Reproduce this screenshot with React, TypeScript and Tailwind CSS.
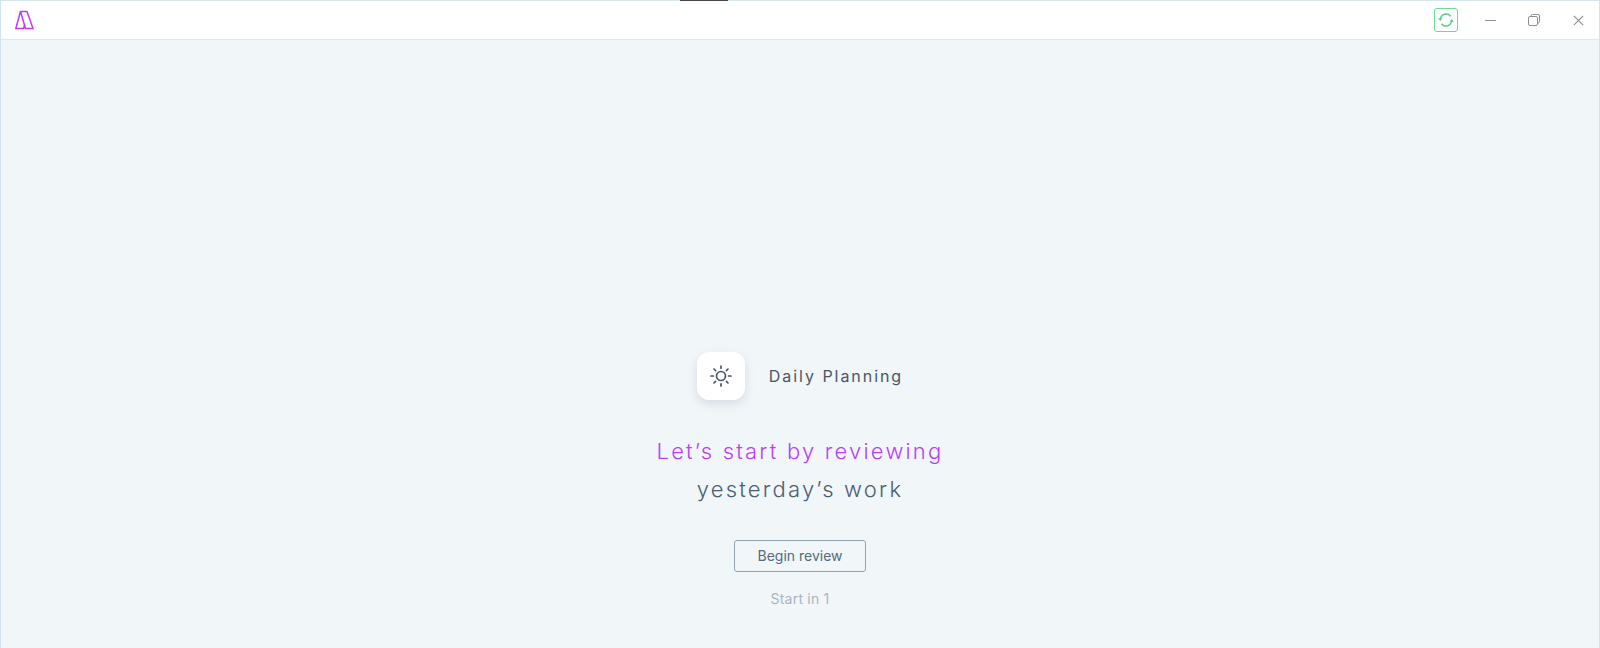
import React from "react";

const SunIcon = () => (
  <svg width="24" height="24" viewBox="0 0 24 24" fill="none" stroke="#4b5563" strokeWidth="1.7" strokeLinecap="round">
    <circle cx="12" cy="12" r="4.5" />
    <path d="M12 2v2.2M12 19.8V22M2 12h2.4M19.6 12H22M5 5l1.6 1.6M17.4 17.4 19 19M5 19l1.6-1.6M17.4 6.6 19 5" />
  </svg>
);

const App = () => {
  return (
    <div className="h-[648px] w-full flex flex-col overflow-hidden bg-[#f1f6f9] border-x border-[#cfe3f1] font-['Inter',sans-serif]">
      {/* title bar */}
      <div className="relative h-10 shrink-0 flex items-center justify-between bg-white border-b border-[#dfe8ee] border-t border-t-[#d5e6f2]">
        <div className="absolute -top-px left-[679px] w-12 h-px bg-[#444]" />
        <svg className="ml-[14px]" width="20" height="20" viewBox="0 0 20 20" fill="none" stroke="#bd3df5" strokeWidth="1.5">
          <path d="M5.5 1.5h6.5l6 17h-7.5ZM5.5 1.5 .8 18.5h7.8l1.2-5" />
        </svg>
        <div className="flex items-center">
          <div className="w-6 h-6 flex items-center justify-center rounded-[3px] border border-[#6ed79a]">
            <svg width="18" height="18" viewBox="0 0 18 18" fill="none" stroke="#5fd08e" strokeWidth="1.6">
              <path d="M3.4 8a5.7 5.7 0 0 1 10.2-2.8M14.6 10a5.7 5.7 0 0 1-10.2 2.8" />
              <path d="M1 7.2h4.6L3.3 10ZM17 10.8h-4.6L14.7 8Z" fill="#5fd08e" stroke="none" />
            </svg>
          </div>
          <div className="w-[11px] h-px bg-[#8b8f96] ml-[27px]" />
          <svg className="ml-8" width="12" height="12" viewBox="0 0 12 12" fill="none" stroke="#8b8f96">
            <rect x="0.5" y="2.5" width="9" height="9" rx="1.5" />
            <path d="M3 2.5V2A1.5 1.5 0 0 1 4.5.5H10A1.5 1.5 0 0 1 11.5 2v5.5A1.5 1.5 0 0 1 10 9h-.5" />
          </svg>
          <svg className="ml-[33px] mr-[15px]" width="11" height="11" viewBox="0 0 11 11" fill="none" stroke="#8b8f96" strokeWidth="1.1">
            <path d="m.8.8 9.4 9.4M10.2.8.8 10.2" />
          </svg>
        </div>
      </div>

      {/* planning prompt */}
      <div className="flex-1 flex flex-col items-center justify-end pb-[39px]">
        <div className="flex items-center gap-6">
          <div className="w-12 h-12 flex items-center justify-center rounded-xl bg-white shadow-[0_4px_10px_rgba(148,163,184,0.3)]">
            <SunIcon />
          </div>
          <span className="text-base font-normal tracking-[1.95px] text-[#4b5563]">Daily Planning</span>
        </div>
        <h1 className="mt-8 text-[22px] leading-[38px] tracking-[2.2px] text-center font-[350] text-[#b93ff7]">
          Let’s start by reviewing
          <br />
          <span className="text-[#4a6072]">yesterday’s work</span>
        </h1>
        <button className="mt-8 w-[132px] h-8 rounded-[3px] border border-[#94a3b3] text-sm text-[#566b7c]">
          Begin review
        </button>
        <div className="mt-[17px] text-sm tracking-[0.2px] text-[#aab4c0]">Start in 1</div>
      </div>
    </div>
  );
};

export default App;
